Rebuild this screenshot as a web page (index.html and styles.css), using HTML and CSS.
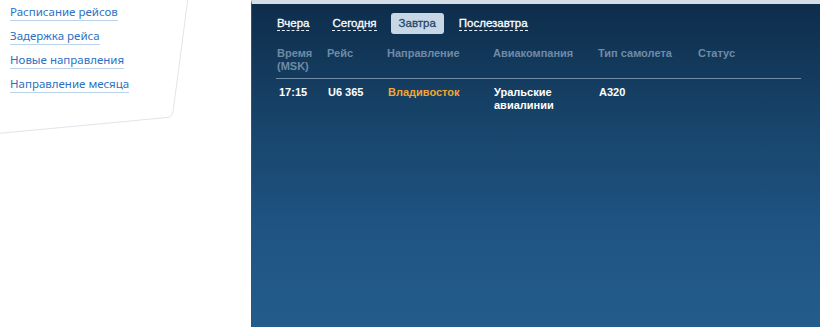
FILE: index.html
```html
<!DOCTYPE html>
<html lang="ru">
<head>
<meta charset="utf-8">
<link rel="stylesheet" href="styles.css">
</head>
<body>
<div class="page">
  <aside class="side">
    <svg class="card" width="251" height="140" viewBox="0 0 251 140">
      <path d="M188 -2 L173 112 Q172 117 167 117.5 L-2 133.5" fill="#fff" stroke="#dfe5ec" stroke-width="1"/>
    </svg>
    <ul class="links">
      <li><a href="#">Расписание рейсов</a></li>
      <li><a href="#">Задержка рейса</a></li>
      <li><a href="#">Новые направления</a></li>
      <li><a href="#">Направление месяца</a></li>
    </ul>
  </aside>
  <main class="panel">
    <nav class="tabs">
      <span class="tab">Вчера</span>
      <span class="tab">Сегодня</span>
      <span class="tab active">Завтра</span>
      <span class="tab">Послезавтра</span>
    </nav>
    <div class="table">
      <div class="row head">
        <div>Время<br>(MSK)</div>
        <div>Рейс</div>
        <div>Направление</div>
        <div>Авиакомпания</div>
        <div>Тип самолета</div>
        <div>Статус</div>
      </div>
      <div class="row body">
        <div>17:15</div>
        <div>U6 365</div>
        <div class="dest">Владивосток</div>
        <div>Уральские<br>авиалинии</div>
        <div>A320</div>
        <div></div>
      </div>
    </div>
  </main>
</div>
</body>
</html>
```
FILE: styles.css
```css
html, body {
  margin: 0;
  padding: 0;
  height: 100%;
  background: #fff;
}
.page {
  display: flex;
  height: 327px;
  overflow: hidden;
}
.side {
  position: relative;
  width: 251px;
  flex: none;
}
.card {
  position: absolute;
  left: 0;
  top: 0;
}
.links {
  position: relative;
  list-style: none;
  margin: 0;
  padding: 4px 0 0 10px;
  display: flex;
  flex-direction: column;
  align-items: flex-start;
  gap: 7px;
  font-family: "Noto Sans", "Open Sans", sans-serif;
  font-size: 11.5px;
  line-height: 16px;
}
.links a {
  color: #2d71c2;
  text-decoration: none;
  border-bottom: 1px solid #bcd2ea;
  display: inline-block;
}
.panel {
  flex: 1;
  border-top: 4px solid #d3dee7;
  border-left: 1px solid #2a5678;
  background: linear-gradient(to bottom, #0e2d4b 0%, #174369 35%, #1f5483 70%, #235d8c 100%);
  padding: 9px 19px 0 24px;
  font-family: "Liberation Sans", Arial, sans-serif;
  font-size: 11px;
  font-weight: bold;
}
.tabs {
  display: flex;
  align-items: center;
  height: 21px;
  font-size: 11.5px;
  padding-left: 1px;
}
.tab {
  color: #fff;
  border-bottom: 1px dashed #e6eef5;
  line-height: 13px;
  margin-right: 23px;
  font-weight: normal;
  -webkit-text-stroke: 0.3px #fff;
}
.tab.active {
  border: none;
  background: #c7d7e5;
  color: #22476b;
  -webkit-text-stroke: 0.3px #22476b;
  border-radius: 3px;
  padding: 4px 8px;
  margin-left: -9px;
  margin-right: 15px;
}
.table {
  margin-top: 13px;
}
.row {
  display: grid;
  grid-template-columns: 50px 60px 106px 105px 100px 1fr;
  padding-left: 1px;
}
.head {
  color: #6e8ba7;
  line-height: 13px;
  padding-bottom: 5px;
  border-bottom: 1px solid #6f8ca8;
}
.body {
  color: #fff;
  padding-top: 7px;
  padding-left: 3px;
  grid-template-columns: 49px 60px 106px 105px 100px 1fr;
  line-height: 13px;
}
.dest {
  color: #f1a731;
}
```
